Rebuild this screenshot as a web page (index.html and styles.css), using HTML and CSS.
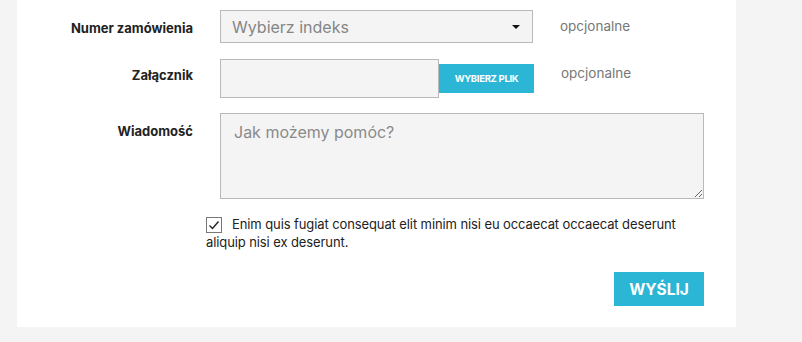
FILE: index.html
```html
<!DOCTYPE html>
<html lang="pl">
<head>
  <meta charset="UTF-8">
  <title>Kontakt</title>
  <link rel="stylesheet" href="styles.css">
</head>
<body>
  <div class="card">
    <form class="contact-form">
      <!-- Numer zamówienia -->
      <div class="row">
        <label class="label">Numer zamówienia</label>
        <div class="select">
          <span>Wybierz indeks</span>
          <span class="caret"></span>
        </div>
        <span class="hint">opcjonalne</span>
      </div>

      <!-- Załącznik -->
      <div class="row row-file">
        <label class="label">Załącznik</label>
        <div class="file">
          <div class="file-box"></div>
          <button type="button" class="file-button">WYBIERZ PLIK</button>
        </div>
        <span class="hint">opcjonalne</span>
      </div>

      <!-- Wiadomość -->
      <div class="row row-message">
        <label class="label">Wiadomość</label>
        <textarea class="message" placeholder="Jak możemy pomóc?"></textarea>
      </div>

      <!-- Zgoda -->
      <div class="consent">
        <span class="checkbox">
          <svg width="14" height="14" viewBox="0 0 14 14"><path d="M2.5 7.5 L5.5 10.5 L11.5 3.5" fill="none" stroke="#222" stroke-width="1.4"/></svg>
        </span>Enim quis fugiat consequat elit minim nisi eu occaecat occaecat deserunt aliquip nisi ex deserunt.
      </div>

      <div class="actions">
        <button type="button" class="send">WYŚLIJ</button>
      </div>
    </form>
  </div>
</body>
</html>
```

FILE: styles.css
```css
body {
  margin: 0;
  background-color: #f4f4f4;
  color: #222;
  font-family: Inter, "Liberation Sans", sans-serif;
  overflow: hidden;
}

.card {
  margin-left: 17px;
  width: 719px;
  height: 327px;
  background: white;
  box-sizing: border-box;
  padding-top: 10px;
}

.row {
  display: flex;
  align-items: flex-start;
  margin-bottom: 16px;
}

.label {
  width: 176px;
  margin-right: 27px;
  text-align: right;
  font-size: 13px;
  font-weight: 700;
  line-height: 20px;
  padding-top: 8px;
}

.row-file {
  margin-bottom: 15px;
}

.row-file .label {
  padding-top: 6px;
}

.row-message .label {
  padding-top: 8px;
}

.select {
  width: 313px;
  height: 33px;
  box-sizing: border-box;
  border: 1px solid #b9b9b9;
  background: #f4f4f4;
  display: flex;
  align-items: center;
  justify-content: space-between;
  padding: 0 12px 0 11px;
  font-size: 16px;
  color: #858585;
}

.caret {
  width: 0;
  height: 0;
  border-left: 4px solid transparent;
  border-right: 4px solid transparent;
  border-top: 4px solid #111;
}

.hint {
  margin-left: 27px;
  font-size: 13.5px;
  color: #777;
  line-height: 20px;
  padding-top: 6px;
}

.row-file .hint {
  padding-top: 4px;
}

.file {
  display: flex;
  align-items: flex-start;
  width: 314px;
}

.file-box {
  width: 219px;
  height: 39px;
  box-sizing: border-box;
  border: 1px solid #b9b9b9;
  background: #f4f4f4;
}

.file-button {
  margin-top: 5px;
  width: 95px;
  height: 29px;
  border: none;
  background: #2bb6d6;
  color: white;
  font-family: inherit;
  font-size: 9.5px;
  font-weight: 700;
  letter-spacing: -0.3px;
  padding: 0;
}

.message {
  width: 484px;
  height: 86px;
  box-sizing: border-box;
  border: 1px solid #b9b9b9;
  background: #f4f4f4;
  margin: 0;
  padding: 8px 13px;
  font-family: inherit;
  font-size: 16px;
  color: #333;
}

.message::placeholder {
  color: #8a8a8a;
}

.consent {
  margin-left: 189px;
  width: 480px;
  font-size: 13px;
  line-height: 18px;
  letter-spacing: -0.1px;
  color: #222;
}

.checkbox {
  display: inline-flex;
  align-items: center;
  justify-content: center;
  width: 16px;
  height: 16px;
  box-sizing: border-box;
  border: 1px solid #777;
  vertical-align: -3px;
  margin-right: 10px;
}

.actions {
  display: flex;
  justify-content: flex-end;
  width: 687px;
  margin-top: 21px;
}

.send {
  width: 90px;
  height: 34px;
  border: none;
  background: #2bb6d6;
  color: white;
  font-family: inherit;
  font-size: 15.5px;
  font-weight: 700;
  padding: 0;
}
```
